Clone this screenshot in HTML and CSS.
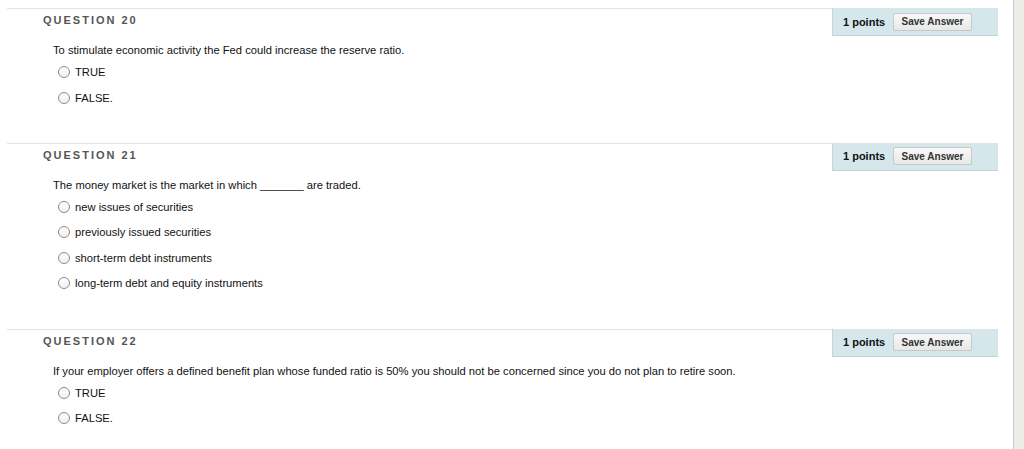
FILE: index.html
```html
<!DOCTYPE html>
<html>
<head>
<meta charset="utf-8">
<link rel="stylesheet" href="styles.css">
</head>
<body>
<div class="page">
  <main class="main">
    <section class="question">
      <div class="q-header">
        <div class="q-title">QUESTION 20</div>
        <div class="q-points">
          <span class="points">1 points</span>
          <button class="save">Save Answer</button>
        </div>
      </div>
      <p class="q-text">To stimulate economic activity the Fed could increase the reserve ratio.</p>
      <ul class="options">
        <li><span class="radio"></span>TRUE</li>
        <li><span class="radio"></span>FALSE.</li>
      </ul>
    </section>
    <section class="question">
      <div class="q-header">
        <div class="q-title">QUESTION 21</div>
        <div class="q-points">
          <span class="points">1 points</span>
          <button class="save">Save Answer</button>
        </div>
      </div>
      <p class="q-text">The money market is the market in which _______ are traded.</p>
      <ul class="options">
        <li><span class="radio"></span>new issues of securities</li>
        <li><span class="radio"></span>previously issued securities</li>
        <li><span class="radio"></span>short-term debt instruments</li>
        <li><span class="radio"></span>long-term debt and equity instruments</li>
      </ul>
    </section>
    <section class="question">
      <div class="q-header">
        <div class="q-title">QUESTION 22</div>
        <div class="q-points">
          <span class="points">1 points</span>
          <button class="save">Save Answer</button>
        </div>
      </div>
      <p class="q-text">If your employer offers a defined benefit plan whose funded ratio is 50% you should not be concerned since you do not plan to retire soon.</p>
      <ul class="options">
        <li><span class="radio"></span>TRUE</li>
        <li><span class="radio"></span>FALSE.</li>
      </ul>
    </section>
  </main>
  <aside class="side"></aside>
</div>
</body>
</html>
```

FILE: styles.css
```css
html, body {
  margin: 0;
  padding: 0;
  background: #ffffff;
  font-family: "Liberation Sans", Arial, Helvetica, sans-serif;
  color: #111;
}
.page {
  display: flex;
  width: 1024px;
  height: 449px;
  overflow: hidden;
}
.main {
  width: 1013px;
  padding-top: 8px;
  box-sizing: border-box;
}
.side {
  flex: 1;
  background: #eeece7;
  border-left: 1px solid #cfcbc3;
}
.question {
  margin-bottom: 32.5px;
}
.q-header {
  display: flex;
  margin-left: 7px;
  width: 991px;
  height: 28px;
}
.q-title {
  flex: 1;
  border-top: 1px solid #e4e4e4;
  padding-left: 36px;
  padding-top: 5px;
  box-sizing: border-box;
  font-size: 11px;
  font-weight: bold;
  letter-spacing: 2px;
  color: #555555;
}
.q-points {
  width: 166px;
  box-sizing: border-box;
  background: #d5e7eb;
  border-left: 1px solid #c4d4d8;
  border-bottom: 1px solid #c3d2d6;
  display: flex;
  align-items: center;
  padding-left: 10px;
}
.points {
  font-size: 11px;
  font-weight: bold;
  color: #111;
  width: 50px;
}
.save {
  width: 79px;
  height: 18px;
  margin: 0;
  padding: 0;
  border: 1px solid #c8c8c8;
  border-radius: 2px;
  background: linear-gradient(#f8f8f8, #e8e8e8);
  font-family: "Liberation Sans", Arial, sans-serif;
  font-size: 10px;
  font-weight: bold;
  color: #333;
}
.q-text {
  margin: 7px 0 0 53px;
  font-size: 11.2px;
  line-height: 14px;
  height: 14px;
  color: #111;
}
.options {
  list-style: none;
  margin: 2.25px 0 0 58px;
  padding: 0;
}
.options li {
  display: flex;
  align-items: center;
  height: 25.5px;
  font-size: 11.2px;
  color: #111;
}
.radio {
  width: 10px;
  height: 10px;
  border: 1px solid #8a8a8a;
  border-radius: 50%;
  background: linear-gradient(#ffffff, #f2f2f2);
  margin-right: 5px;
  flex: none;
}
```
